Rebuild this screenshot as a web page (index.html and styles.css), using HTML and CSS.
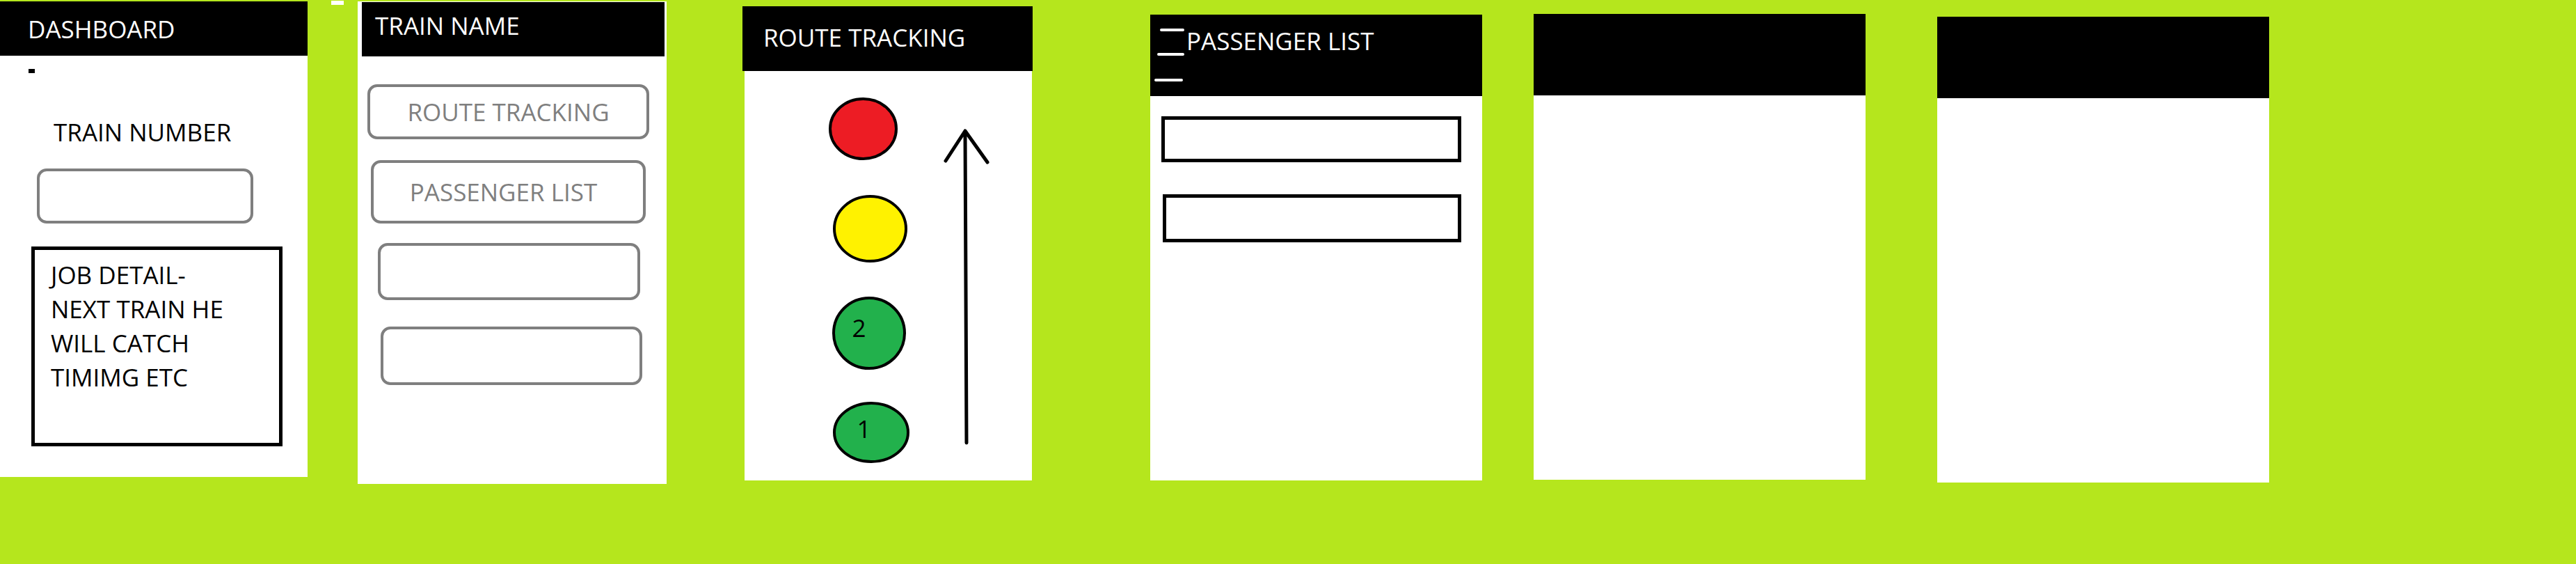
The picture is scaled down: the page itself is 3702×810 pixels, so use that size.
FILE: index.html
```html
<!DOCTYPE html>
<html>
<head>
    <title>Train Staff App - Wireframes</title>
    <meta name="viewport" content="width=device-width, initial-scale=1.0">
    <link rel="stylesheet" href="styles.css">
</head>
<body>
    <div class="board">
        <!-- screen 1: dashboard -->
        <section class="screen screen--dashboard">
            <header class="screen-header">DASHBOARD</header>
            <div class="dot"></div>
            <p class="field-label">TRAIN NUMBER</p>
            <div class="field"></div>
            <div class="job-box">JOB DETAIL-<br>NEXT TRAIN HE<br>WILL CATCH<br>TIMIMG ETC</div>
        </section>

        <div class="stray-mark"></div>

        <!-- screen 2: train menu -->
        <section class="screen screen--train">
            <header class="screen-header">TRAIN NAME</header>
            <button class="nav-btn nav-btn--route">ROUTE TRACKING</button>
            <button class="nav-btn nav-btn--list">PASSENGER LIST</button>
            <button class="nav-btn nav-btn--third"></button>
            <button class="nav-btn nav-btn--fourth"></button>
        </section>

        <!-- screen 3: route tracking -->
        <section class="screen screen--route">
            <header class="screen-header">ROUTE TRACKING</header>
            <div class="route-map">
                <svg class="route-svg" viewBox="0 0 413 588" width="413" height="588">
                    <g class="stops">
                        <ellipse cx="170.5" cy="83" rx="47.5" ry="43" fill="#ed1c24"/>
                        <ellipse cx="180.5" cy="226.5" rx="51.5" ry="46.5" fill="#fff200"/>
                        <ellipse cx="179" cy="376.5" rx="51" ry="50.5" fill="#22b14c"/>
                        <ellipse cx="182" cy="519" rx="53" ry="42" fill="#22b14c"/>
                    </g>
                    <text class="stop-num" x="164.5" y="382">2</text>
                    <text class="stop-num" x="171.5" y="527">1</text>
                    <path class="direction" d="M319 534 L317 86 M289 129 L317 86 L349 131"/>
                </svg>
            </div>
        </section>

        <!-- screen 4: passenger list -->
        <section class="screen screen--passengers">
            <header class="screen-header">
                <svg class="menu-icon" viewBox="0 0 48 117" width="48" height="117">
                    <path d="M12 22 H43 M8 57 H43 M4 94 H41"/>
                </svg>
                <span class="header-title">PASSENGER LIST</span>
            </header>
            <div class="list-row list-row--first"></div>
            <div class="list-row list-row--second"></div>
        </section>

        <!-- screens 5 and 6: empty -->
        <section class="screen screen--blank-a">
            <header class="screen-header"></header>
        </section>
        <section class="screen screen--blank-b">
            <header class="screen-header"></header>
        </section>
    </div>
</body>
</html>
```

FILE: styles.css
```css
:root {
    --bg-color: #b5e61d;
    --line-gray: #7f7f7f;
}
body {
    margin: 0;
    background-color: var(--bg-color);
    font-family: "Open Sans", "Noto Sans", sans-serif;
    font-size: 35px;
    line-height: 48px;
}
.board {
    display: flex;
    align-items: flex-start;
}
.screen {
    flex: none;
    display: flex;
    flex-direction: column;
    align-items: flex-start;
    background-color: #fff;
    box-sizing: border-box;
}
.screen-header {
    align-self: stretch;
    background-color: #000;
    color: #fff;
    box-sizing: border-box;
}

/* dashboard */
.screen--dashboard {
    margin-top: 2px;
    width: 442px;
    height: 683px;
}
.screen--dashboard .screen-header {
    height: 78px;
    padding: 16px 0 0 40px;
}
.dot {
    margin: 19px 0 0 41px;
    width: 9px;
    height: 6px;
    background-color: #000;
}
.field-label {
    margin: 61px 0 0 77px;
    color: #000;
}
.field {
    margin: 28px 0 0 53px;
    width: 311px;
    height: 79px;
    border: 4px solid var(--line-gray);
    border-radius: 14px;
    box-sizing: border-box;
}
.job-box {
    margin: 33px 0 0 45px;
    width: 361px;
    height: 287px;
    border: 5px solid #000;
    padding: 11px 0 0 23px;
    line-height: 49px;
    box-sizing: border-box;
}
.stray-mark {
    flex: none;
    margin: 1px 0 0 34px;
    width: 18px;
    height: 6px;
    background-color: #fff;
}

/* train menu */
.screen--train {
    margin: 2px 0 0 20px;
    width: 444px;
    height: 693px;
}
.screen--train .screen-header {
    margin: 1px 3px 0 6px;
    height: 78px;
    padding: 10px 0 0 19px;
}
.nav-btn {
    display: flex;
    align-items: center;
    justify-content: center;
    padding: 0;
    background-color: #fff;
    border: 4px solid var(--line-gray);
    border-radius: 14px;
    box-sizing: border-box;
    color: var(--line-gray);
    font-family: inherit;
    font-size: 35px;
    line-height: 48px;
}
.nav-btn--route {
    margin: 40px 0 0 14px;
    width: 405px;
    height: 79px;
}
.nav-btn--list {
    margin: 30px 0 0 19px;
    width: 395px;
    height: 91px;
    padding-right: 14px;
}
.nav-btn--third {
    margin: 28px 0 0 29px;
    width: 377px;
    height: 82px;
}
.nav-btn--fourth {
    margin: 38px 0 0 33px;
    width: 376px;
    height: 84px;
}

/* route tracking */
.screen--route {
    margin: 9px 0 0 109px;
    width: 417px;
    height: 681px;
    background-color: transparent;
}
.screen--route .screen-header {
    height: 93px;
    padding: 21px 0 0 30px;
}
.route-map {
    flex: 1;
    align-self: stretch;
    margin: 0 1px 0 3px;
    background-color: #fff;
}
.route-svg {
    display: block;
}
.stops ellipse {
    stroke: #000;
    stroke-width: 4;
}
.stop-num {
    font-size: 35px;
    fill: #000;
    text-anchor: middle;
}
.direction {
    fill: none;
    stroke: #000;
    stroke-width: 5;
    stroke-linecap: round;
    stroke-linejoin: round;
}

/* passenger list */
.screen--passengers {
    margin: 21px 0 0 169px;
    width: 477px;
    height: 669px;
}
.screen--passengers .screen-header {
    display: flex;
    align-items: flex-start;
    height: 117px;
    padding-left: 4px;
}
.menu-icon {
    flex: none;
    display: block;
}
.menu-icon path {
    fill: none;
    stroke: #fff;
    stroke-width: 4;
    stroke-linecap: round;
}
.header-title {
    padding-top: 14px;
}
.list-row {
    border: 5px solid #000;
    box-sizing: border-box;
}
.list-row--first {
    margin: 29px 0 0 16px;
    width: 431px;
    height: 66px;
}
.list-row--second {
    margin: 46px 0 0 18px;
    width: 429px;
    height: 69px;
}

/* empty screens */
.screen--blank-a,
.screen--blank-b {
    width: 477px;
    height: 669px;
}
.screen--blank-a {
    margin: 20px 0 0 74px;
}
.screen--blank-b {
    margin: 24px 0 0 103px;
}
.screen--blank-a .screen-header,
.screen--blank-b .screen-header {
    height: 117px;
}
```
